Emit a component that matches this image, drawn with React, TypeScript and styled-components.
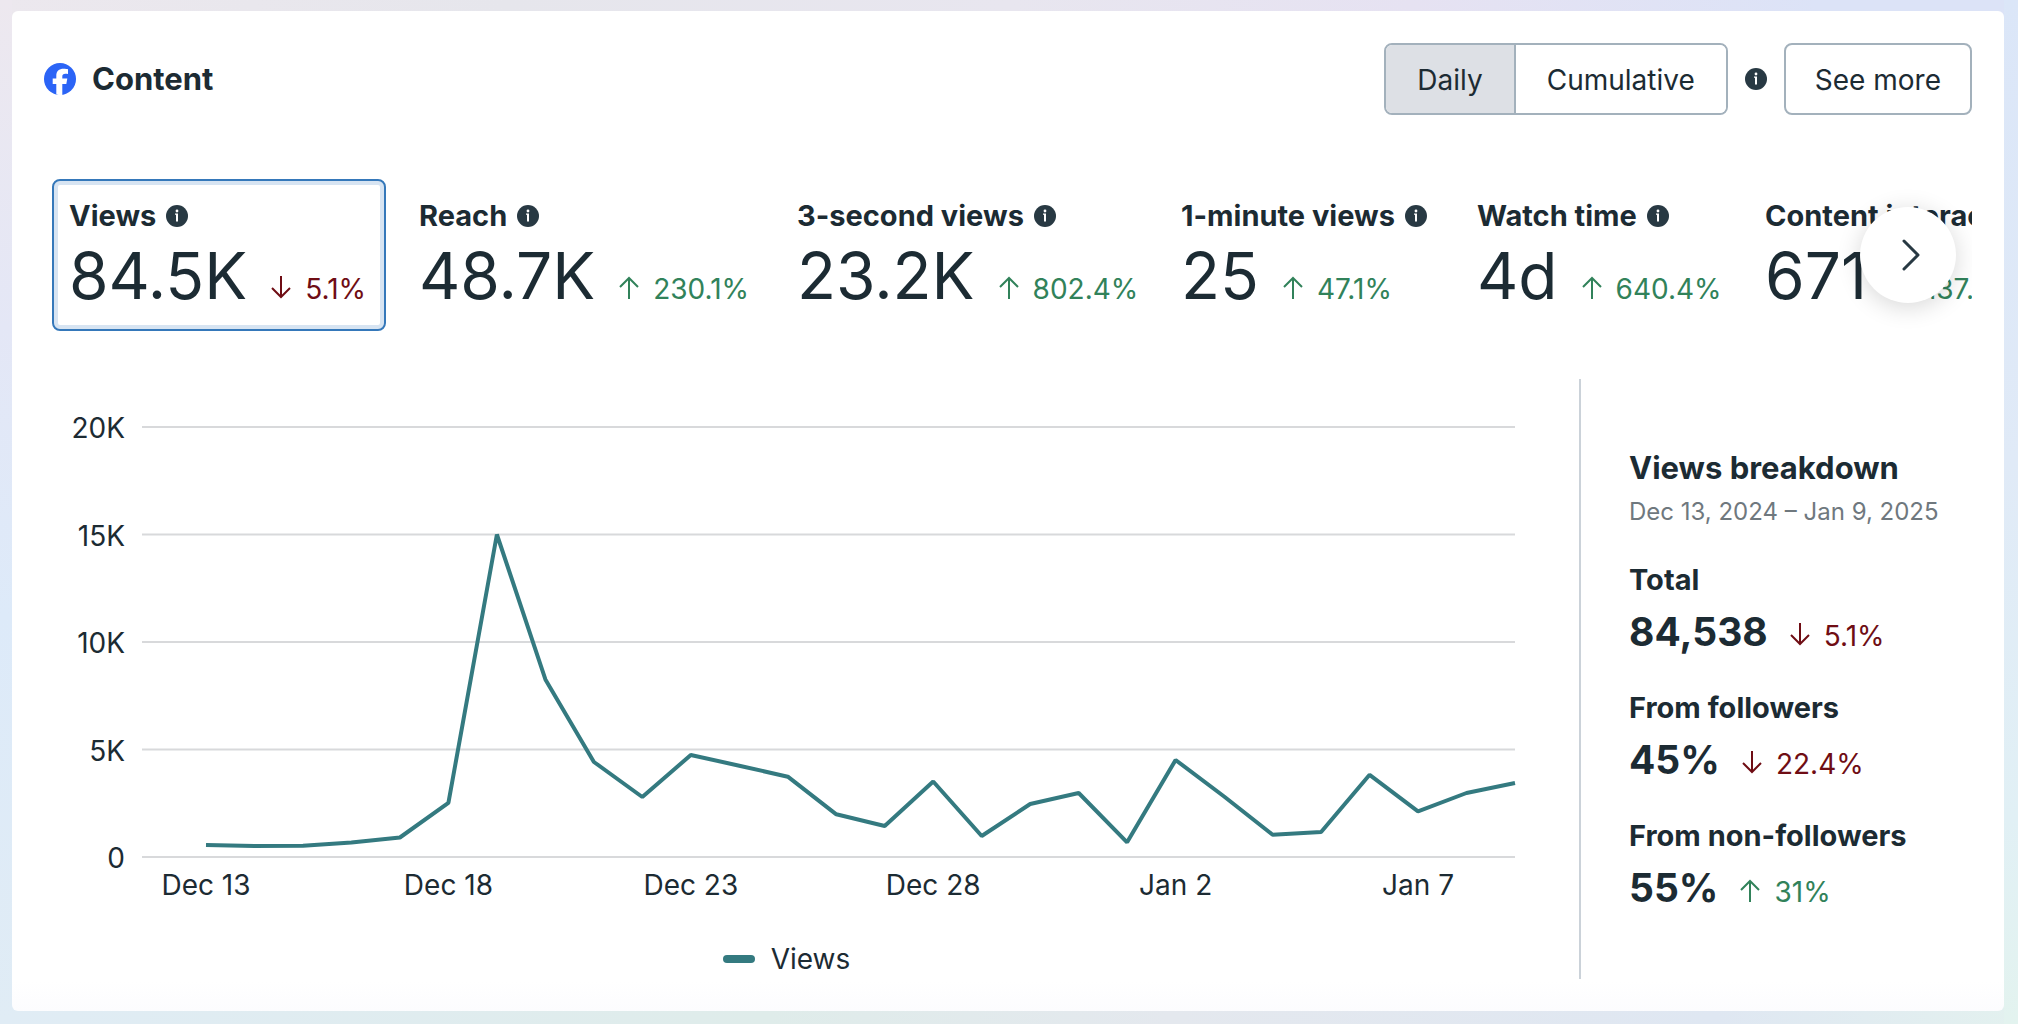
import React from "react";
import styled, { createGlobalStyle, css } from "styled-components";

const ink = "#1c2b33";
const green = "#31825a";
const red = "#6f0d14";
const teal = "#347a80";
const fontStack = `Inter, "Liberation Sans", sans-serif`;

const GlobalStyle = createGlobalStyle`
  *, *::before, *::after { box-sizing: border-box; }
  body {
    margin: 0;
    min-height: 100vh;
    font-family: ${fontStack};
    color: ${ink};
    background:
      linear-gradient(to bottom, #ede8ef 0%, #e4e7f6 32%, #ddeaf9 60%, #e0ecf5 100%) left / 12px 100% no-repeat,
      linear-gradient(to bottom, #dbe6f8 0%, #e0eaf7 45%, #e1f0f5 80%, #e3f3ef 100%) right / 14px 100% no-repeat,
      linear-gradient(to right, #ece8ee 0%, #e6e6ec 25%, #e8e6ef 50%, #e6e2f2 70%, #dce3f7 90%) top / 100% 50% no-repeat,
      linear-gradient(to right, #e0ecf5 0%, #dfecea 38%, #e4e8ee 58%, #dfe7f2 85%, #e3f1ef 100%) bottom / 100% 50% no-repeat;
  }
  h1, h2, h3, p, dl, dd, dt, figure { margin: 0; }
`;

const Page = styled.main`
  padding: 11px 14px 13px 12px;
`;

const Card = styled.section`
  padding: 32px;
  border-radius: 6px;
  background: linear-gradient(to bottom, #ffffff 97%, #fcfcfe 100%);
`;

const Header = styled.header`
  display: flex;
  align-items: center;
  justify-content: space-between;
  gap: 32px;
  margin-bottom: 32px;
`;

const Brand = styled.div`
  display: flex;
  align-items: center;
  gap: 16px;
`;

const Heading = styled.h2`
  font-size: 31px;
  line-height: 40px;
  font-weight: 700;
`;

const Actions = styled.div`
  display: flex;
  align-items: center;
  gap: 17px;
`;

const Segmented = styled.div`
  display: flex;
  border: 2px solid #a3b1bc;
  border-radius: 8px;
  overflow: hidden;
`;

const buttonText = css`
  font-family: inherit;
  font-size: 28px;
  line-height: 36px;
  font-weight: 400;
  color: ${ink};
  cursor: pointer;
`;

const Segment = styled.button<{ $active?: boolean }>`
  ${buttonText}
  height: 68px;
  padding: 2px 31px 0;
  border: 0;
  background: ${(p) => (p.$active ? "#dde0e5" : "#ffffff")};

  & + & {
    border-left: 2px solid #a3b1bc;
  }
`;

const OutlineButton = styled.button`
  ${buttonText}
  height: 72px;
  padding: 2px 29px 0;
  border: 2px solid #a3b1bc;
  border-radius: 8px;
  background: #ffffff;
`;

const MetricsViewport = styled.div`
  position: relative;
  padding: 32px 0 32px 8px;
  overflow: hidden;
`;

const MetricsTrack = styled.div`
  display: grid;
  grid-template-columns: 334px 362px 368px 280px 272px max-content;
  gap: 16px;
`;

const Metric = styled.button<{ $active?: boolean }>`
  display: flex;
  flex-direction: column;
  gap: 2px;
  padding: 15px;
  border: 2px solid ${(p) => (p.$active ? "#3578ba" : "transparent")};
  border-radius: 8px;
  background: transparent;
  box-shadow: ${(p) => (p.$active ? "inset 0 0 0 4px #d7e4f2" : "none")};
  font-family: inherit;
  color: ${ink};
  text-align: left;
  white-space: nowrap;
  cursor: pointer;
`;

const MetricLabel = styled.span`
  display: flex;
  align-items: center;
  gap: 10px;
  font-size: 29px;
  line-height: 40px;
  font-weight: 700;
`;

const MetricRow = styled.span`
  display: flex;
  align-items: baseline;
  gap: 22px;
`;

const MetricValue = styled.span`
  font-size: 64px;
  line-height: 76px;
  font-weight: 400;
`;

const DeltaText = styled.span<{ $up: boolean }>`
  display: inline-flex;
  align-items: baseline;
  gap: 12px;
  font-size: 28px;
  line-height: 28px;
  font-weight: 400;
  color: ${(p) => (p.$up ? green : red)};
`;

const NextButton = styled.button`
  position: absolute;
  top: 50%;
  right: 16px;
  display: grid;
  place-items: center;
  width: 96px;
  height: 96px;
  margin-top: -48px;
  padding: 0;
  border: 0;
  border-radius: 50%;
  background: #ffffff;
  box-shadow: 0 4px 24px rgba(0, 0, 0, 0.16);
  cursor: pointer;
`;

const Body = styled.div`
  display: grid;
  grid-template-columns: minmax(0, 1fr) 393px;
  margin-top: 16px;
`;

const ChartFigure = styled.figure`
  display: flex;
  flex-direction: column;
  gap: 28px;
  padding: 0 64px 0 14px;
`;

const ChartSvg = styled.svg`
  display: block;
  width: 100%;
  height: auto;
  overflow: visible;
  font-size: 28px;
  fill: ${ink};
`;

const Legend = styled.figcaption`
  display: flex;
  align-items: center;
  justify-content: center;
  gap: 16px;
  font-size: 28px;
  line-height: 40px;
`;

const LegendSwatch = styled.span`
  width: 32px;
  height: 8px;
  border-radius: 4px;
  background: ${teal};
`;

const Breakdown = styled.aside`
  display: flex;
  flex-direction: column;
  justify-content: center;
  gap: 32px;
  padding-top: 2px;
  padding-left: 48px;
  border-left: 2px solid #cbd2d9;
`;

const BreakdownHead = styled.div`
  display: flex;
  flex-direction: column;
  gap: 8px;
`;

const DateRange = styled.p`
  font-size: 24px;
  line-height: 32px;
  color: #6f787e;
`;

const BreakdownList = styled.dl`
  display: flex;
  flex-direction: column;
  gap: 32px;
`;

const BreakdownItem = styled.div`
  display: flex;
  flex-direction: column;
  gap: 8px;
`;

const BreakdownLabel = styled.dt`
  font-size: 29px;
  line-height: 40px;
  font-weight: 700;
`;

const BreakdownValue = styled.dd`
  display: flex;
  align-items: baseline;
  gap: 20px;
  font-size: 39px;
  line-height: 48px;
  font-weight: 700;
`;

function FacebookLogo() {
  return (
    <svg width="32" height="32" viewBox="0 0 32 32" aria-hidden="true">
      <circle cx="16" cy="16" r="16" fill="#2b64f6" />
      <path
        fill="#fff"
        d="M12.3 31.6V21H8.7v-5.5h3.6v-2.6c0-4.9 2.6-7.2 7.4-7.2 1.7 0 3.3.2 4.3.5v4.8c-.7-.1-1.6-.2-2.6-.2-2.2 0-3.1.9-3.1 2.9v1.8h5l-1 5.5h-4v10.9c-2 .3-4 .2-6-.3z"
      />
    </svg>
  );
}

function InfoIcon() {
  return (
    <svg width="22" height="22" viewBox="0 0 22 22" role="img" aria-label="More information">
      <circle cx="11" cy="11" r="11" fill="#283943" />
      <circle cx="11" cy="6" r="1.4" fill="#fff" />
      <path d="M9 8.6h3v7.9h-2V9.8H9z" fill="#fff" />
    </svg>
  );
}

function Delta({ up, children }: { up: boolean; children: React.ReactNode }) {
  return (
    <DeltaText $up={up}>
      <svg width="24" height="23" viewBox="0 0 24 23" fill="none" stroke="currentColor" strokeWidth="2" aria-hidden="true">
        <path d={up ? "M12 23V2M3 11l9-9 9 9" : "M12 0v21M3 12l9 9 9-9"} />
      </svg>
      {children}
    </DeltaText>
  );
}

const metrics = [
  { label: "Views", value: "84.5K", up: false, change: "5.1%" },
  { label: "Reach", value: "48.7K", up: true, change: "230.1%" },
  { label: "3-second views", value: "23.2K", up: true, change: "802.4%" },
  { label: "1-minute views", value: "25", up: true, change: "47.1%" },
  { label: "Watch time", value: "4d", up: true, change: "640.4%" },
  { label: "Content interactions", value: "671", up: true, change: "137.1%" },
];

const breakdown = [
  { label: "Total", value: "84,538", up: false, change: "5.1%" },
  { label: "From followers", value: "45%", up: false, change: "22.4%" },
  { label: "From non-followers", value: "55%", up: true, change: "31%" },
];

const dailyViews = [
  560, 505, 520, 670, 905, 2515, 15000, 8260, 4420, 2790, 4745, 4245, 3735, 1985,
  1440, 3510, 975, 2465, 2975, 685, 4510, 2815, 1035, 1165, 3825, 2125, 2975, 3440,
];
const yTicks = [
  { value: 20000, label: "20K" },
  { value: 15000, label: "15K" },
  { value: 10000, label: "10K" },
  { value: 5000, label: "5K" },
  { value: 0, label: "0" },
];
const xTicks = ["Dec 13", "Dec 18", "Dec 23", "Dec 28", "Jan 2", "Jan 7"];

const chart = { width: 1457, height: 532, left: 84, firstX: 148, top: 48, bottom: 478 };
const xAt = (i: number) =>
  chart.firstX + ((chart.width - chart.firstX) * i) / (dailyViews.length - 1);
const yAt = (v: number) => chart.bottom - ((chart.bottom - chart.top) * v) / 20000;

function ViewsChart() {
  const points = dailyViews.map((v, i) => `${xAt(i).toFixed(1)},${yAt(v).toFixed(1)}`).join(" ");
  return (
    <ChartSvg viewBox={`0 0 ${chart.width} ${chart.height}`} role="img" aria-label="Daily views">
      {yTicks.map((t) => (
        <g key={t.label}>
          <line x1={chart.left} x2={chart.width} y1={yAt(t.value)} y2={yAt(t.value)} stroke="#d8d9db" strokeWidth="2" />
          <text x="67" y={yAt(t.value) + 11} textAnchor="end">
            {t.label}
          </text>
        </g>
      ))}
      {xTicks.map((label, i) => (
        <text key={label} x={xAt(i * 5)} y="516" textAnchor="middle">
          {label}
        </text>
      ))}
      <polyline points={points} fill="none" stroke={teal} strokeWidth="4" strokeLinejoin="bevel" />
    </ChartSvg>
  );
}

export default function App() {
  const [mode, setMode] = React.useState("Daily");
  const [selected, setSelected] = React.useState("Views");
  return (
    <>
      <GlobalStyle />
      <Page>
        <Card>
          <Header>
            <Brand>
              <FacebookLogo />
              <Heading>Content</Heading>
            </Brand>
            <Actions>
              <Segmented>
                {["Daily", "Cumulative"].map((m) => (
                  <Segment key={m} type="button" $active={m === mode} aria-pressed={m === mode} onClick={() => setMode(m)}>
                    {m}
                  </Segment>
                ))}
              </Segmented>
              <InfoIcon />
              <OutlineButton type="button">See more</OutlineButton>
            </Actions>
          </Header>

          <MetricsViewport>
            <MetricsTrack>
              {metrics.map((m) => (
                <Metric
                  key={m.label}
                  type="button"
                  $active={m.label === selected}
                  aria-pressed={m.label === selected}
                  onClick={() => setSelected(m.label)}
                >
                  <MetricLabel>
                    {m.label}
                    <InfoIcon />
                  </MetricLabel>
                  <MetricRow>
                    <MetricValue>{m.value}</MetricValue>
                    <Delta up={m.up}>{m.change}</Delta>
                  </MetricRow>
                </Metric>
              ))}
            </MetricsTrack>
            <NextButton type="button" aria-label="Next metrics">
              <svg width="26" height="36" viewBox="0 0 26 36" fill="none" stroke="#283943" strokeWidth="3" strokeLinecap="round" strokeLinejoin="round" aria-hidden="true">
                <path d="M9 4l14 14L9 32" />
              </svg>
            </NextButton>
          </MetricsViewport>

          <Body>
            <ChartFigure>
              <ViewsChart />
              <Legend>
                <LegendSwatch />
                Views
              </Legend>
            </ChartFigure>
            <Breakdown>
              <BreakdownHead>
                <Heading as="h3">Views breakdown</Heading>
                <DateRange>Dec 13, 2024 – Jan 9, 2025</DateRange>
              </BreakdownHead>
              <BreakdownList>
                {breakdown.map((b) => (
                  <BreakdownItem key={b.label}>
                    <BreakdownLabel>{b.label}</BreakdownLabel>
                    <BreakdownValue>
                      {b.value}
                      <Delta up={b.up}>{b.change}</Delta>
                    </BreakdownValue>
                  </BreakdownItem>
                ))}
              </BreakdownList>
            </Breakdown>
          </Body>
        </Card>
      </Page>
    </>
  );
}
